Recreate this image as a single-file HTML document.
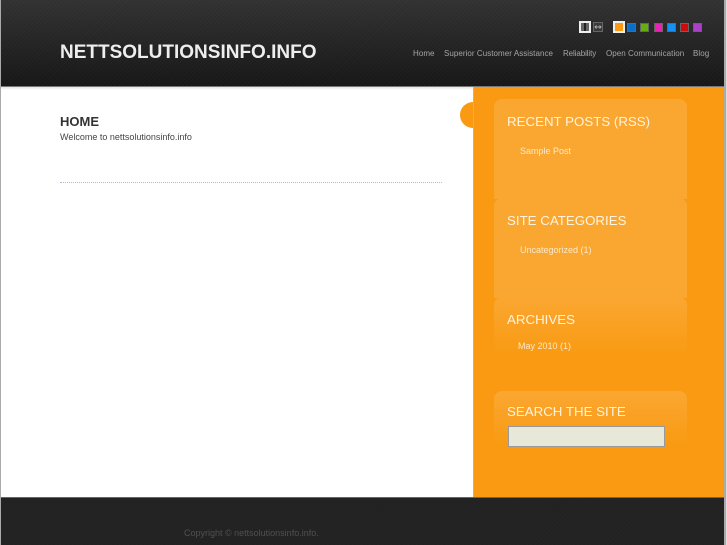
<!DOCTYPE html>
<html>
<head>
<meta charset="utf-8">
<style>
html,body{margin:0;padding:0;background:#fff;}
body{width:727px;height:545px;overflow:hidden;position:relative;font-family:"Liberation Sans",sans-serif;}
.a{position:absolute;white-space:nowrap;}
.t{filter:blur(.3px);}
#frameL{left:0;top:0;width:1px;height:545px;background:#aaa;z-index:5;}
#frameR{left:724px;top:0;width:2px;height:545px;background:#aaa;z-index:5;}
#frameR2{left:726px;top:0;width:1px;height:545px;background:#ddd;z-index:5;}
#head{left:0;top:0;width:724px;height:86px;background:repeating-linear-gradient(135deg,rgba(255,255,255,.018) 0 1px,transparent 1px 3px),linear-gradient(#323232,#171717);}
#headline{left:0;top:86px;width:724px;height:1px;background:#777;}
#shadow{left:0;top:87px;width:473px;height:3px;background:linear-gradient(#e4e4e4,#fff);}
#title{left:60px;top:41px;font-size:19px;line-height:24px;font-weight:bold;color:#eee;}
.nav{top:48px;font-size:8px;letter-spacing:.05px;line-height:12px;color:#a5a5a5;}
.sw{top:23px;width:7px;height:7px;border:1px solid #666;}
#side{left:473px;top:87px;width:251px;height:410px;background:#f99a12;border-left:1px solid #d8b070;box-sizing:border-box;}
#tab{left:460px;top:102px;width:26px;height:26px;border-radius:13px;background:#f99a12;}
.w{left:494px;width:193px;border-radius:8px 8px 0 0;}
.wt{left:507px;font-size:13.3px;line-height:18px;color:#fff3dc;}
.wl{font-size:9px;line-height:12px;color:#fde8c8;}
#foot{left:0;top:497px;width:724px;height:48px;background:repeating-linear-gradient(135deg,rgba(255,255,255,.012) 0 1px,transparent 1px 3px),#222;border-top:1px solid #666;box-sizing:border-box;}
</style>
</head>
<body>
<div class="a" id="head"></div>
<div class="a" id="headline"></div>
<div class="a" id="shadow"></div>
<div class="a t" id="title">NETTSOLUTIONSINFO.INFO</div>

<div class="a" style="left:579px;top:21px;width:8px;height:8px;border:2px solid #eee;background:#666;"></div>
<div class="a" style="left:584px;top:23px;width:2px;height:8px;background:#222;"></div>
<div class="a" style="left:593px;top:22px;width:8px;height:8px;border:1px solid #666;background:#3a3a3a;"></div>
<svg class="a" style="left:594px;top:23px" width="8" height="8" viewBox="0 0 8 8"><path d="M1 4H7M2.5 2.5L1 4L2.5 5.5M5.5 2.5L7 4L5.5 5.5" stroke="#aaa" stroke-width="1" fill="none"/></svg>

<div class="a" style="left:613px;top:21px;width:8px;height:8px;border:2px solid #eee;background:#f99a12;"></div>
<div class="a sw" style="left:627px;background:#0a6fc9;"></div>
<div class="a sw" style="left:640px;background:#63b00c;"></div>
<div class="a sw" style="left:654px;background:#ec22b4;"></div>
<div class="a sw" style="left:667px;background:#1590f5;"></div>
<div class="a sw" style="left:680px;background:#cf0a0f;"></div>
<div class="a sw" style="left:693px;background:#aa40c8;"></div>

<div class="a nav t" style="left:413px;">Home</div>
<div class="a nav t" style="left:444px;">Superior Customer Assistance</div>
<div class="a nav t" style="left:563px;letter-spacing:-.1px;">Reliability</div>
<div class="a nav t" style="left:606px;">Open Communication</div>
<div class="a nav t" style="left:693px;">Blog</div>

<div class="a t" style="left:60px;top:113px;font-size:13px;line-height:17px;font-weight:bold;color:#333;">HOME</div>
<div class="a t" style="left:60px;top:131px;font-size:9px;line-height:12px;color:#444;">Welcome to nettsolutionsinfo.info</div>
<div class="a" style="left:60px;top:182px;width:382px;height:0;border-top:1px dotted #b9b4dc;"></div>

<div class="a" id="tab"></div>
<div class="a" id="side"></div>

<div class="a w" style="top:99px;height:100px;background:#faa732;"></div>
<div class="a w" style="top:198px;height:100px;background:#faa732;"></div>
<div class="a w" style="top:297px;height:58px;background:linear-gradient(#faa732,#f99a12);"></div>
<div class="a w" style="top:391px;height:54px;background:linear-gradient(#faa732,#f99a12);"></div>

<div class="a wt t" style="top:113px;">RECENT POSTS (RSS)</div>
<div class="a wl t" style="left:520px;top:145px;">Sample Post</div>
<div class="a wt t" style="top:212px;">SITE CATEGORIES</div>
<div class="a wl t" style="left:520px;top:244px;">Uncategorized (1)</div>
<div class="a wt t" style="top:311px;">ARCHIVES</div>
<div class="a wl t" style="left:518px;top:340px;">May 2010 (1)</div>
<div class="a wt t" style="top:403px;">SEARCH THE SITE</div>
<div class="a" style="left:508px;top:426px;width:155px;height:19px;background:#e8e8d8;border:1px solid #999;"></div>

<div class="a" id="foot"></div>
<div class="a t" style="left:184px;top:527px;font-size:9px;line-height:12px;color:#505050;">Copyright © nettsolutionsinfo.info.</div>

<div class="a" id="frameL"></div>
<div class="a" id="frameR"></div>
<div class="a" id="frameR2"></div>
</body>
</html>
